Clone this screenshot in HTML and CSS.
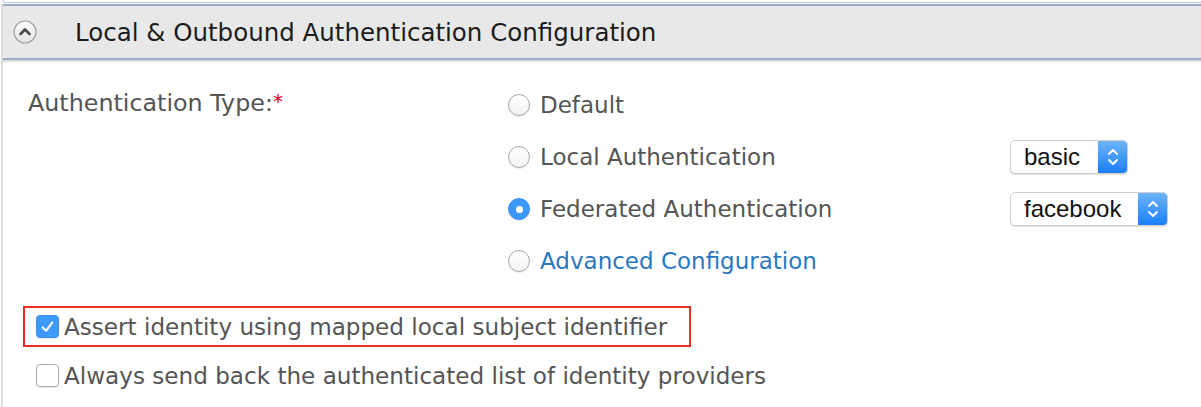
FILE: index.html
```html
<!DOCTYPE html>
<html>
<head>
<meta charset="utf-8">
<link rel="stylesheet" href="styles.css">
</head>
<body>
<div class="prev"></div>
<div class="section">
  <div class="header">
    <span class="toggle">
      <svg width="24" height="24" viewBox="0 0 24 24">
        <defs>
          <linearGradient id="tg" x1="0" y1="0" x2="0" y2="1">
            <stop offset="0" stop-color="#ffffff"/>
            <stop offset="1" stop-color="#e2e2e2"/>
          </linearGradient>
        </defs>
        <circle cx="12" cy="12" r="11" fill="url(#tg)" stroke="#a0a0a0" stroke-width="1.2"/>
        <path d="M7.5 14 L12 9.5 L16.5 14" fill="none" stroke="#4a4a4a" stroke-width="2.6" stroke-linecap="round" stroke-linejoin="round"/>
      </svg>
    </span>
    <span class="title">Local &amp; Outbound Authentication Configuration</span>
  </div>
  <div class="rule"></div>
  <div class="content">
    <div class="form">
      <div class="label">Authentication Type:<span class="req">*</span></div>
      <div class="options">
        <div class="opt">
          <span class="radio"></span><span class="otext">Default</span>
        </div>
        <div class="opt">
          <span class="radio"></span><span class="otext">Local Authentication</span>
          <span class="select s-basic"><span class="sval">basic</span><span class="sbtn"><svg width="14" height="24" viewBox="0 0 14 24"><path d="M3 9 L7 5 L11 9 M3 15 L7 19 L11 15" fill="none" stroke="#fff" stroke-width="2" stroke-linecap="round" stroke-linejoin="round"/></svg></span></span>
        </div>
        <div class="opt">
          <span class="radio checked"></span><span class="otext">Federated Authentication</span>
          <span class="select s-fb"><span class="sval">facebook</span><span class="sbtn"><svg width="14" height="24" viewBox="0 0 14 24"><path d="M3 9 L7 5 L11 9 M3 15 L7 19 L11 15" fill="none" stroke="#fff" stroke-width="2" stroke-linecap="round" stroke-linejoin="round"/></svg></span></span>
        </div>
        <div class="opt">
          <span class="radio"></span><a class="otext link">Advanced Configuration</a>
        </div>
      </div>
    </div>
    <div class="checks">
      <div class="chk highlight">
        <span class="box checked"><svg width="22" height="22" viewBox="0 0 22 22"><path d="M6 11.5 L9.5 15 L16 6.5" fill="none" stroke="#fff" stroke-width="2.2" stroke-linecap="round" stroke-linejoin="round"/></svg></span>
        <span class="ctext">Assert identity using mapped local subject identifier</span>
      </div>
      <div class="chk">
        <span class="box"></span>
        <span class="ctext">Always send back the authenticated list of identity providers</span>
      </div>
    </div>
  </div>
</div>
</body>
</html>
```
FILE: styles.css
```css
html, body {
  margin: 0;
  padding: 0;
  background: #fff;
  font-family: "DejaVu Sans", Verdana, sans-serif;
  overflow: hidden;
}
.prev {
  height: 2px;
  margin-left: 2px;
  border-left: 2px solid #dedede;
  border-bottom: 1px solid #b9c4d8;
  border-bottom-left-radius: 4px;
  margin-bottom: 1px;
}
.section {
  margin-left: 1px;
  border-left: 2px solid #dcdcdc;
}
.header {
  background: #e8e8e8;
  border-top: 2px solid #9aabc9;
  border-bottom: 2px solid #9aabc9;
  height: 52px;
  display: flex;
  align-items: center;
}
.toggle {
  display: flex;
  margin-left: 10px;
  width: 24px;
  height: 24px;
}
.title {
  margin-left: 38px;
  font-size: 24.5px;
  color: #1c1c1c;
}
.rule {
  height: 2px;
  background: #dcdcdc;
}
.content {
  padding-top: 17px;
  height: 328px;
}
.form {
  display: flex;
}
.label {
  width: 480px;
  padding-left: 25px;
  box-sizing: border-box;
  font-size: 23.8px;
  color: #555;
  padding-top: 10px;
  flex: none;
}
.req {
  color: #e3001b;
  font-size: 20px;
  vertical-align: 3px;
}
.options {
  flex: 1;
  margin-left: 26px;
}
.opt {
  height: 52px;
  display: flex;
  align-items: center;
  font-size: 23px;
  color: #555;
}
.radio {
  width: 22px;
  height: 22px;
  border-radius: 50%;
  border: 1px solid #a8a8a8;
  box-sizing: border-box;
  background: linear-gradient(#fff, #f4f4f4);
  box-shadow: 0 1px 1px rgba(0,0,0,0.08);
  flex: none;
  position: relative;
  margin-left: -1px;
}
.radio.checked {
  background: #3d99fb;
  border-color: #3d8ff0;
}
.radio.checked::after {
  content: "";
  position: absolute;
  width: 7px;
  height: 7px;
  border-radius: 50%;
  background: #fff;
  left: 6.5px;
  top: 6.5px;
}
.otext {
  margin-left: 10px;
}
.link {
  color: #2a78c2;
}
.select {
  margin-left: auto;
  height: 34px;
  border: 1px solid #cfcfcf;
  border-radius: 5px;
  box-sizing: border-box;
  display: flex;
  align-items: stretch;
  background: #fff;
  box-shadow: 0 1px 1px rgba(0,0,0,0.12);
  overflow: hidden;
  font-family: "Liberation Sans", Arial, sans-serif;
  font-size: 24px;
  color: #111;
}
.s-basic { width: 118px; margin-right: 73px; }
.s-fb { width: 158px; margin-right: 33px; }
.sval {
  flex: 1;
  padding-left: 13px;
  display: flex;
  align-items: center;
}
.sbtn {
  width: 29px;
  background: linear-gradient(#6db4fb, #1a7ffb);
  display: flex;
  align-items: center;
  justify-content: center;
}
.checks {
  margin-top: 19px;
  margin-left: 20px;
}
.chk {
  display: flex;
  align-items: center;
  height: 41px;
  font-size: 23.1px;
  color: #555;
  padding-left: 11px;
  box-sizing: border-box;
  width: 668px;
  border: 2px solid transparent;
}
.chk + .chk {
  margin-top: 8px;
}
.chk.highlight {
  border-color: #ee2b21;
}
.box {
  width: 23px;
  height: 23px;
  border: 1px solid #aaa;
  border-radius: 4px;
  box-sizing: border-box;
  background: #fff;
  flex: none;
  display: flex;
  align-items: center;
  justify-content: center;
  box-shadow: 0 1px 1px rgba(0,0,0,0.08);
}
.box.checked {
  background: #3d99fb;
  border-color: #3d8ff0;
}
.ctext {
  margin-left: 5px;
  white-space: nowrap;
}
```
